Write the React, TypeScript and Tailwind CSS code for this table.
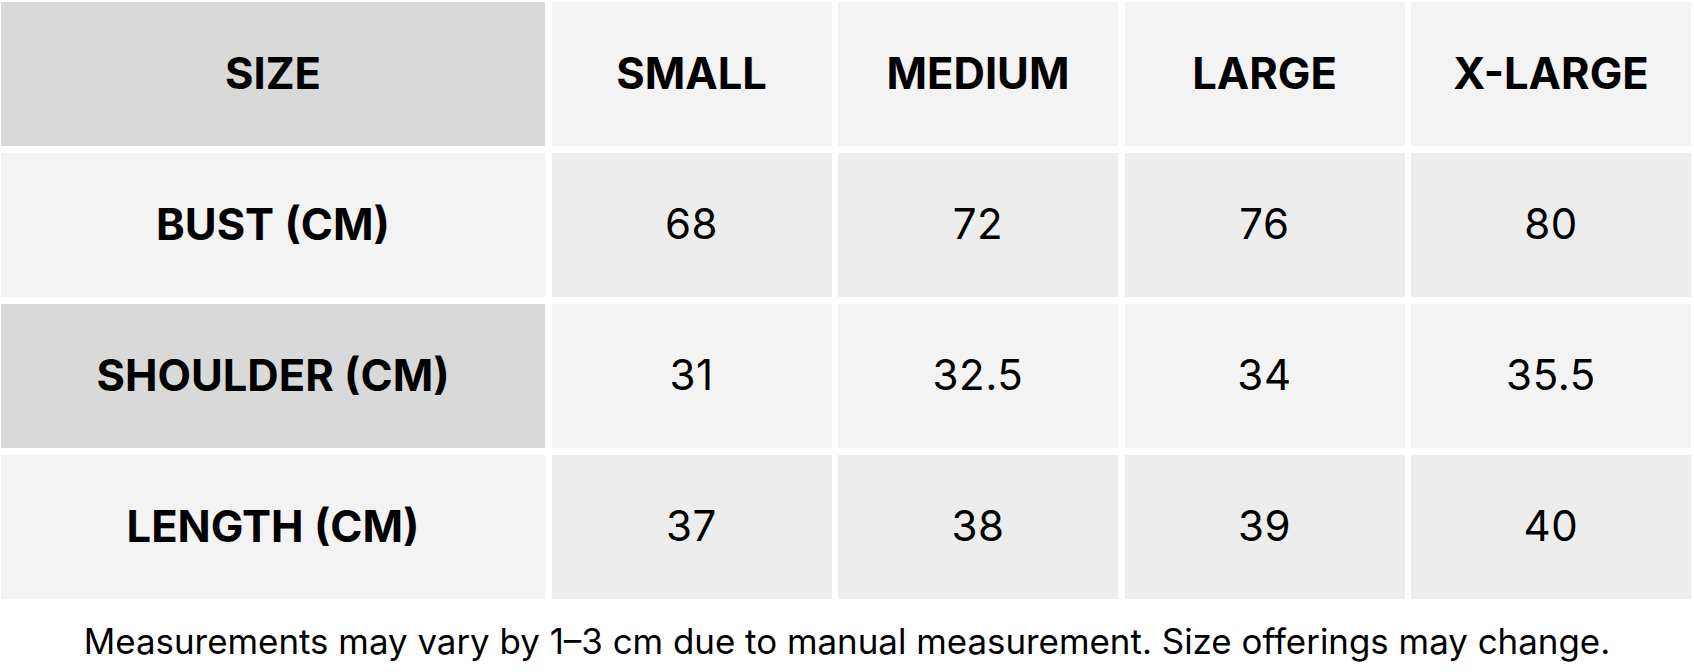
import React from "react";

const sizes = ["SMALL", "MEDIUM", "LARGE", "X-LARGE"];

const rows = [
  { label: "BUST (CM)", values: ["68", "72", "76", "80"], labelBg: "bg-[#f3f3f3]", cellBg: "bg-[#ededed]" },
  { label: "SHOULDER (CM)", values: ["31", "32.5", "34", "35.5"], labelBg: "bg-[#d9d9d9]", cellBg: "bg-[#f3f3f3]" },
  { label: "LENGTH (CM)", values: ["37", "38", "39", "40"], labelBg: "bg-[#f3f3f3]", cellBg: "bg-[#ededed]" },
];

function Cell({ children, className }: { children: React.ReactNode; className: string }) {
  return <div className={`flex h-[144px] items-center justify-center ${className}`}>{children}</div>;
}

export default function App() {
  return (
    <div className="h-[672px] w-[1694px] bg-white text-black">
      <div className="ml-px pt-[2px]">
        <div className="grid w-[1690px] grid-cols-[544px_repeat(4,1fr)] gap-x-[6.5px] gap-y-[7px]">
          {/* Header */}
          <Cell className="bg-[#d9d9d9] font-['Inter',sans-serif] text-[43.5px] font-bold">SIZE</Cell>
          {sizes.map((s) => (
            <Cell key={s} className="bg-[#f3f3f3] font-['Inter',sans-serif] text-[43.5px] font-bold">
              {s}
            </Cell>
          ))}

          {/* Measurement rows */}
          {rows.map((r) => (
            <React.Fragment key={r.label}>
              <Cell className={`${r.labelBg} font-['Inter',sans-serif] text-[43.5px] font-bold`}>{r.label}</Cell>
              {r.values.map((v, i) => (
                <Cell key={i} className={`${r.cellBg} pb-[4px] font-['Inter',sans-serif] text-[42px] font-normal tracking-[0.6px]`}>
                  {v}
                </Cell>
              ))}
            </React.Fragment>
          ))}
        </div>
      </div>

      <p className="mt-[22px] text-center font-['Inter',sans-serif] text-[34.9px] leading-[40px]">
        Measurements may vary by 1–3 cm due to manual measurement. Size offerings may change.
      </p>
    </div>
  );
}
